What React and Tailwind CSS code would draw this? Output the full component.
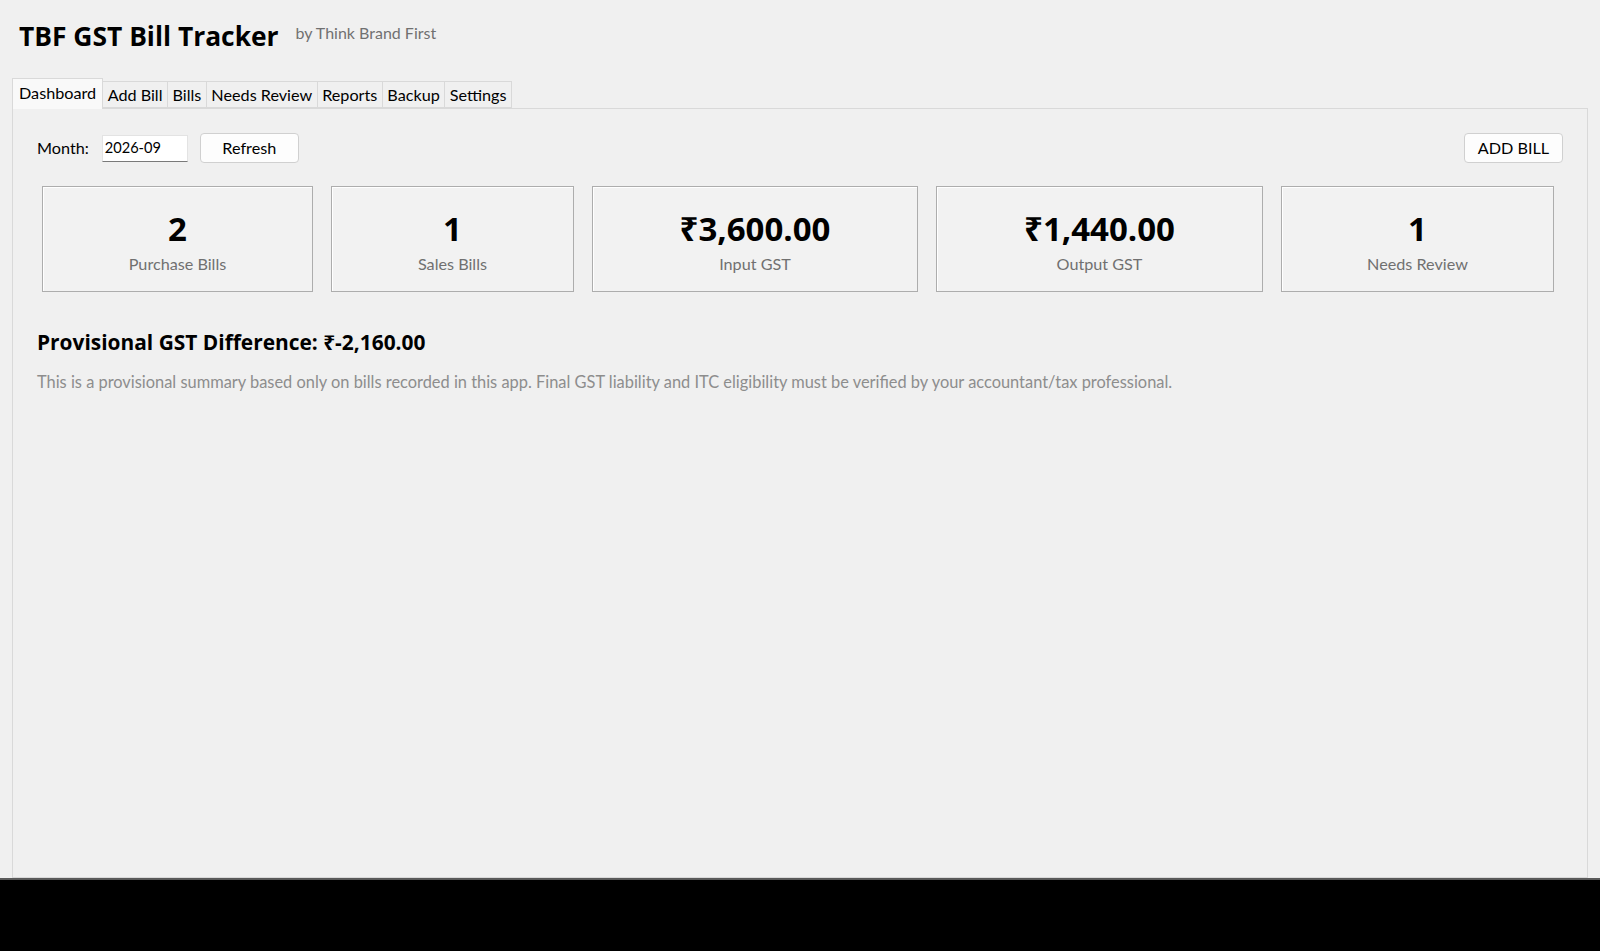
import React from "react";

const SANS = '"Lato", "Open Sans", sans-serif';
const BOLD = '"Open Sans", "Noto Sans", sans-serif';

const cards = [
  { v: "2", l: "Purchase Bills", w: "w-[271px]" },
  { v: "1", l: "Sales Bills", w: "w-[243px]" },
  { v: "₹3,600.00", l: "Input GST", w: "w-[326px]" },
  { v: "₹1,440.00", l: "Output GST", w: "w-[327px]" },
  { v: "1", l: "Needs Review", w: "w-[273px]" },
];

const tabs = ["Add Bill", "Bills", "Needs Review", "Reports", "Backup", "Settings"];

export default function App() {
  return (
    <div className="w-[1600px] h-[951px] bg-black overflow-hidden" style={{ fontFamily: SANS }}>
      <div className="h-[880px] bg-[#f0f0f0] flex flex-col border-b-2 border-[#5a5a5a]">
        <div className="flex items-start pl-[19px] pt-[16px] h-[56px]">
          <div className="text-[26.4px] font-bold leading-[40px] text-black" style={{ fontFamily: BOLD }}>
            TBF GST Bill Tracker
          </div>
          <div className="ml-[17px] text-[16px] leading-[34px] text-[#707070]">by Think Brand First</div>
        </div>
        <div className="flex items-end ml-[12px] mt-[22px] h-[30px] relative z-10">
          <div className="h-[31px] -mb-px px-[6px] pb-[2px] flex items-center bg-[#f9f9f9] border border-b-0 border-[#d9d9d9] text-[16.2px] text-black">
            Dashboard
          </div>
          {tabs.map((t) => (
            <div
              key={t}
              className="h-[27px] px-[4.5px] pt-[1px] flex items-center bg-[#f0f0f0] border border-l-0 border-[#d9d9d9] text-[16.2px] text-black"
            >
              {t}
            </div>
          ))}
        </div>
        <div className="mx-[12px] flex-1 border border-[#d9d9d9] bg-[#f0f0f0] pl-[24px] pr-[24px] pt-[24px]">
          <div className="flex items-center h-[30px]">
            <span className="text-[16.2px] text-black">Month:</span>
            <div className="ml-[13px] w-[86px] h-[27px] bg-white border border-[#e3e3e3] border-b-[#7a7a7a] flex items-center px-[2px] text-[14.6px] text-black">
              2026-09
            </div>
            <button className="ml-[12px] w-[99px] h-[30px] bg-[#fdfdfd] border border-[#d0d0d0] rounded-[4px] text-[16.2px] text-black">
              Refresh
            </button>
            <button className="ml-auto w-[99px] h-[30px] bg-[#fdfdfd] border border-[#d0d0d0] rounded-[4px] text-[16.2px] text-black">
              ADD BILL
            </button>
          </div>
          <div className="flex gap-[18px] ml-[5px] mt-[23px]">
            {cards.map((c) => (
              <div
                key={c.l}
                className={`${c.w} h-[106px] border border-[#adadad] bg-[#f2f2f2] shadow-[inset_1px_1px_0_#ffffff] flex flex-col items-center pt-[22px]`}
              >
                <div className="text-[33px] font-bold leading-[40px] text-black" style={{ fontFamily: BOLD }}>
                  {c.v}
                </div>
                <div className="mt-[3px] text-[16.2px] leading-[24px] text-[#707070]">{c.l}</div>
              </div>
            ))}
          </div>
          <div className="mt-[36px] text-[20.9px] font-bold leading-[28px] text-black" style={{ fontFamily: BOLD }}>
            Provisional GST Difference: ₹-2,160.00
          </div>
          <div className="mt-[14px] text-[16.4px] leading-[24px] text-[#8d8d8d]">
            This is a provisional summary based only on bills recorded in this app. Final GST liability and ITC eligibility must be verified by your accountant/tax professional.
          </div>
        </div>
      </div>
    </div>
  );
}
